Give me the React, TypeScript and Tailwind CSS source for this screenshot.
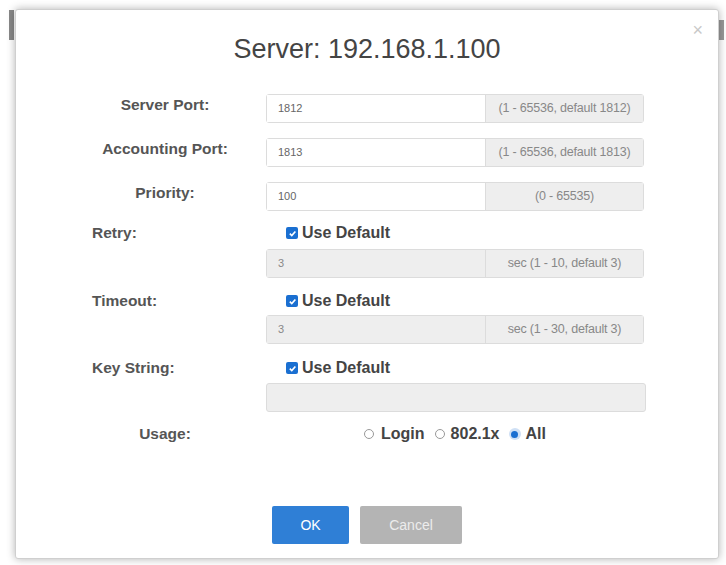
import React from "react";

const font = { fontFamily: '"Liberation Sans", Arial, sans-serif' };

function Check() {
  return (
    <span className="inline-flex h-[12px] w-[12px] items-center justify-center rounded-[2px] bg-[#1a6fd1]">
      <svg width="9" height="9" viewBox="0 0 10 10">
        <path d="M2 5.2 L4.2 7.3 L8.2 2.8" stroke="white" strokeWidth="1.8" fill="none" />
      </svg>
    </span>
  );
}

function Addon({ value, addon, disabled }: { value: string; addon: string; disabled?: boolean }) {
  return (
    <div className="flex h-[29px] w-[378px] rounded-[3px] border border-[#dcdcdc] shadow-[inset_0_1px_1px_rgba(0,0,0,0.06)]">
      <div
        className={`flex w-[219px] items-center border-r border-[#dcdcdc] pl-[11px] text-[11px] ${
          disabled ? "bg-[#eeeeee] text-[#888]" : "bg-white text-[#666]"
        }`}
      >
        {value}
      </div>
      <div className="flex flex-1 items-center justify-center bg-[#eeeeee] text-[12.5px] tracking-[-0.2px] text-[#888]">
        {addon}
      </div>
    </div>
  );
}

function Radio({ checked }: { checked?: boolean }) {
  return checked ? (
    <span className="inline-flex h-[12px] w-[12px] items-center justify-center rounded-full bg-[#cfe0f5]">
      <span className="h-[7px] w-[7px] rounded-full bg-[#1a6fd1]" />
    </span>
  ) : (
    <span className="inline-block h-[10px] w-[10px] rounded-full border border-[#999] bg-white" />
  );
}

export default function App() {
  const grid = "grid grid-cols-[146px_378px] gap-x-[28px] items-center";
  const labelC = "self-start pt-[2px] leading-[18px] text-center text-[15.5px] font-bold text-[#555] whitespace-nowrap";
  const labelU = "text-center text-[15.5px] font-bold text-[#555] whitespace-nowrap";
  const labelL = "text-left text-[15.5px] font-bold text-[#555]";
  const useDef = "flex items-center gap-[4px] pl-[20px] text-[16px] font-bold text-[#444]";
  return (
    <div style={font} className="relative h-[565px] w-[726px] overflow-hidden bg-white">
      <div className="absolute left-[9px] top-[10px] h-[30px] w-[5px] bg-[#888]" />
      <div className="absolute left-[719px] top-[20px] h-[20px] w-[5px] bg-[#999]" />
      <div className="absolute left-[15px] top-[9px] flex h-[550px] w-[704px] flex-col rounded-[3px] border border-[#cfcfcf] bg-white shadow-[0_0_8px_rgba(0,0,0,0.3)]">
        <div className="absolute right-[15px] top-[11px] text-[18px] leading-none text-[#c8c8c8]">×</div>
        <h1 className="mt-[23px] text-center text-[27px] leading-[32px] text-[#444]">Server: 192.168.1.100</h1>
        <div className="ml-[76px] mt-[29px] flex flex-col">
          <div className={grid}>
            <div className={labelC}>Server Port:</div>
            <Addon value="1812" addon="(1 - 65536, default 1812)" />
          </div>
          <div className={`${grid} mt-[15px]`}>
            <div className={labelC}>Accounting Port:</div>
            <Addon value="1813" addon="(1 - 65536, default 1813)" />
          </div>
          <div className={`${grid} mt-[15px]`}>
            <div className={labelC}>Priority:</div>
            <Addon value="100" addon="(0 - 65535)" />
          </div>

          <div className={`${grid} mt-[10px] h-[20px]`}>
            <div className={labelL}>Retry:</div>
            <div className={useDef}>
              <Check />
              <span>Use Default</span>
            </div>
          </div>
          <div className={`${grid} mt-[8px]`}>
            <div />
            <Addon value="3" addon="sec (1 - 10, default 3)" disabled />
          </div>

          <div className={`${grid} mt-[11px] h-[20px]`}>
            <div className={labelL}>Timeout:</div>
            <div className={useDef}>
              <Check />
              <span>Use Default</span>
            </div>
          </div>
          <div className={`${grid} mt-[6px]`}>
            <div />
            <Addon value="3" addon="sec (1 - 30, default 3)" disabled />
          </div>

          <div className={`${grid} mt-[12px] h-[20px]`}>
            <div className={labelL}>Key String:</div>
            <div className={useDef}>
              <Check />
              <span>Use Default</span>
            </div>
          </div>
          <div className={`${grid} mt-[7px]`}>
            <div />
            <div className="h-[29px] w-[380px] rounded-[3px] border border-[#dcdcdc] bg-[#eeeeee]" />
          </div>

          <div className={`${grid} mt-[10px] h-[20px]`}>
            <div className={labelU}>Usage:</div>
            <div className="flex items-center justify-center text-[16px] font-bold text-[#444]">
              <Radio />
              <span className="ml-[7px]">Login</span>
              <span className="ml-[10px]" />
              <Radio />
              <span className="ml-[6px]">802.1x</span>
              <span className="ml-[9px]" />
              <Radio checked />
              <span className="ml-[5px]">All</span>
            </div>
          </div>
        </div>
        <div className="mt-[64px] flex justify-center gap-[11px]">
          <button className="h-[38px] w-[77px] rounded-[2px] bg-[#2f7fd6] text-[14px] text-white">OK</button>
          <button className="h-[38px] w-[102px] rounded-[2px] bg-[#b4b4b4] text-[14px] text-[#ececec]">Cancel</button>
        </div>
      </div>
    </div>
  );
}
